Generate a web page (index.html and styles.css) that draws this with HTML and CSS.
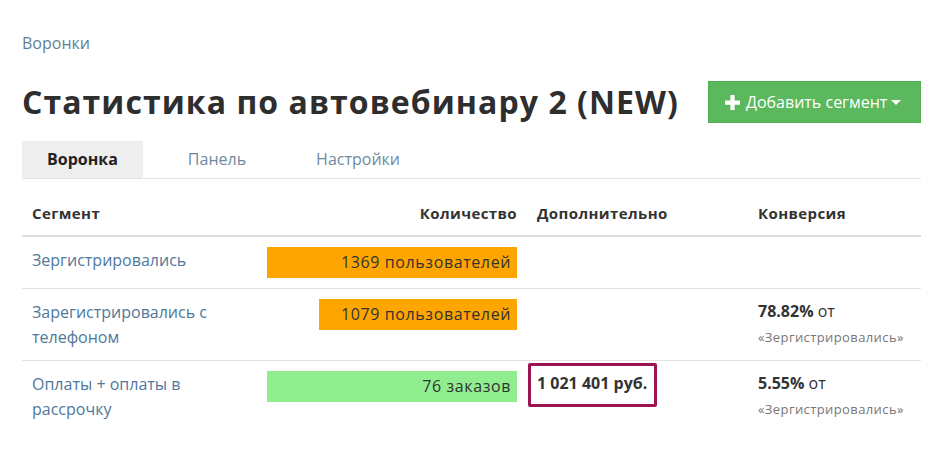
FILE: index.html
```html
<!DOCTYPE html>
<html lang="ru">
<head>
<meta charset="utf-8">
<link rel="stylesheet" href="styles.css">
</head>
<body>
<div class="page">
  <div class="crumbs"><a href="#">Воронки</a></div>
  <div class="head">
    <h1>Статистика по автовебинару 2 (NEW)</h1>
    <button class="btn-add">
      <svg class="plus" width="17" height="17" viewBox="0 0 16 16"><path d="M6 1h4v5h5v4h-5v5H6v-5H1V6h5z" fill="#fff"/></svg>
      <span>Добавить сегмент</span>
      <span class="caret"></span>
    </button>
  </div>
  <ul class="tabs">
    <li class="tab active">Воронка</li>
    <li class="tab">Панель</li>
    <li class="tab">Настройки</li>
  </ul>
  <table class="stats">
    <thead>
      <tr>
        <th class="c-seg">Сегмент</th>
        <th class="c-qty">Количество</th>
        <th class="c-add">Дополнительно</th>
        <th class="c-conv">Конверсия</th>
      </tr>
    </thead>
    <tbody>
      <tr>
        <td class="c-seg"><a href="#">Зергистрировались</a></td>
        <td class="c-qty"><div class="bar orange" style="width:250px">1369 пользователей</div></td>
        <td class="c-add"></td>
        <td class="c-conv"></td>
      </tr>
      <tr>
        <td class="c-seg"><a href="#">Зарегистрировались с телефоном</a></td>
        <td class="c-qty"><div class="bar orange" style="width:198px">1079 пользователей</div></td>
        <td class="c-add"></td>
        <td class="c-conv"><b>78.82%</b> от<div class="ref">«Зергистрировались»</div></td>
      </tr>
      <tr>
        <td class="c-seg"><a href="#">Оплаты + оплаты в рассрочку</a></td>
        <td class="c-qty"><div class="bar green" style="width:250px">76 заказов</div></td>
        <td class="c-add"><span class="boxed">1 021 401 руб.</span></td>
        <td class="c-conv"><b>5.55%</b> от<div class="ref">«Зергистрировались»</div></td>
      </tr>
    </tbody>
  </table>
</div>
</body>
</html>
```

FILE: styles.css
```css
* { box-sizing: border-box; }
html, body { margin: 0; padding: 0; background: #fff; }
body {
  font-family: "Open Sans", Lato, "DejaVu Sans", sans-serif;
  font-size: 16px;
  color: #333;
}
a { color: #4f789b; text-decoration: none; }
.page { padding: 33px 26px 0 22px; }
.crumbs { font-size: 16px; line-height: 20px; }
.crumbs a { color: #5f7f99; }
.head {
  display: flex;
  justify-content: space-between;
  align-items: center;
  margin-top: 28px;
}
h1 {
  margin: 0;
  font-size: 32px;
  font-weight: 700;
  line-height: 40px;
  letter-spacing: 1.05px;
  color: #2e2e2e;
}
.btn-add {
  display: flex;
  align-items: center;
  gap: 5px;
  height: 42px;
  width: 213px;
  padding: 0 15px;
  border: 1px solid #53ad53;
  background: #5cb85c;
  color: #fff;
  font-family: inherit;
  font-size: 16px;
  border-radius: 0;
}
.caret {
  width: 0; height: 0;
  border-left: 5px solid transparent;
  border-right: 5px solid transparent;
  border-top: 5px solid #fff;
  margin-left: -1px;
}
.tabs {
  list-style: none;
  margin: 18px 0 0;
  padding: 0;
  display: flex;
  gap: 20px;
  border-bottom: 1px solid #e3e3e3;
}
.tab {
  padding: 0 25px;
  height: 37px;
  line-height: 37px;
  color: #6f8aa0;
  font-size: 16px;
}
.tab.active { background: #eeeeee; color: #222; font-weight: 700; }
.stats {
  width: 100%;
  border-collapse: collapse;
  table-layout: fixed;
}
.stats th {
  font-weight: 700;
  font-size: 15px;
  letter-spacing: 0.4px;
  text-align: left;
  height: 57px;
  padding: 12px 10px 0;
  border-bottom: 2px solid #dddddd;
  color: #333;
}
.stats td {
  vertical-align: top;
  padding: 10px 10px;
  line-height: 25px;
  border-bottom: 1px solid #e3e3e3;
}
.stats td.c-seg { padding-top: 11px; padding-bottom: 9px; }
.stats tbody tr:last-child td { border-bottom: none; }
.c-seg { width: 235px; }
.c-qty { width: 270px; }
.stats .c-qty { text-align: right; }
.c-add { width: 221px; }
.bar {
  margin-left: auto;
  padding: 3px 6px;
  line-height: 25px;
  letter-spacing: 0.6px;
  color: #333;
  text-align: right;
}
.bar.orange { background: #ffa500; }
.bar.green { background: #90ee90; }
.boxed {
  display: inline-block;
  font-weight: 700;
  border: 3px solid #9c1553;
  border-radius: 2px;
  padding: 5px 7px 8px 6px;
  margin: -8px -10px 0 -9px;
}
.c-conv b { font-weight: 700; font-size: 16px; }
.ref { font-size: 13px; letter-spacing: 0.4px; color: #777; line-height: 25px; margin-top: 1px; }
```
